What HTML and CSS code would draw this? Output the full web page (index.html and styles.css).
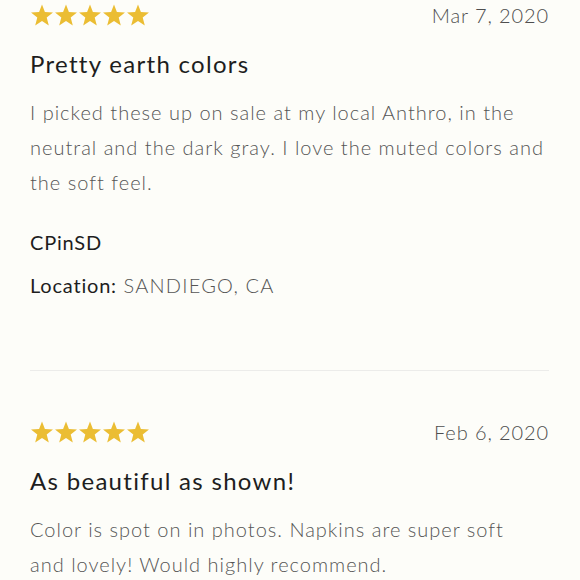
FILE: index.html
```html
<!DOCTYPE html>
<html lang="en">
<head>
  <meta charset="UTF-8" />
  <title>Reviews</title>
  <link rel="stylesheet" href="styles.css">
</head>
<body>
  <div class="reviews">
    <div class="review">
      <div class="review-top">
        <div class="stars">
          <svg viewBox="0 0 24 24"><path d="M12 1.5l2.9 7.6 8.1.4-6.3 5.1 2.1 7.9L12 18l-6.8 4.5 2.1-7.9L1 9.5l8.1-.4z"/></svg>
          <svg viewBox="0 0 24 24"><path d="M12 1.5l2.9 7.6 8.1.4-6.3 5.1 2.1 7.9L12 18l-6.8 4.5 2.1-7.9L1 9.5l8.1-.4z"/></svg>
          <svg viewBox="0 0 24 24"><path d="M12 1.5l2.9 7.6 8.1.4-6.3 5.1 2.1 7.9L12 18l-6.8 4.5 2.1-7.9L1 9.5l8.1-.4z"/></svg>
          <svg viewBox="0 0 24 24"><path d="M12 1.5l2.9 7.6 8.1.4-6.3 5.1 2.1 7.9L12 18l-6.8 4.5 2.1-7.9L1 9.5l8.1-.4z"/></svg>
          <svg viewBox="0 0 24 24"><path d="M12 1.5l2.9 7.6 8.1.4-6.3 5.1 2.1 7.9L12 18l-6.8 4.5 2.1-7.9L1 9.5l8.1-.4z"/></svg>
        </div>
        <span class="date">Mar 7, 2020</span>
      </div>
      <h3 class="title">Pretty earth colors</h3>
      <p class="body">I picked these up on sale at my local Anthro, in the neutral and the dark gray. I love the muted colors and the soft feel.</p>
      <p class="author">CPinSD</p>
      <p class="location"><span class="label">Location:</span> SANDIEGO, CA</p>
    </div>

    <div class="review">
      <div class="review-top">
        <div class="stars">
          <svg viewBox="0 0 24 24"><path d="M12 1.5l2.9 7.6 8.1.4-6.3 5.1 2.1 7.9L12 18l-6.8 4.5 2.1-7.9L1 9.5l8.1-.4z"/></svg>
          <svg viewBox="0 0 24 24"><path d="M12 1.5l2.9 7.6 8.1.4-6.3 5.1 2.1 7.9L12 18l-6.8 4.5 2.1-7.9L1 9.5l8.1-.4z"/></svg>
          <svg viewBox="0 0 24 24"><path d="M12 1.5l2.9 7.6 8.1.4-6.3 5.1 2.1 7.9L12 18l-6.8 4.5 2.1-7.9L1 9.5l8.1-.4z"/></svg>
          <svg viewBox="0 0 24 24"><path d="M12 1.5l2.9 7.6 8.1.4-6.3 5.1 2.1 7.9L12 18l-6.8 4.5 2.1-7.9L1 9.5l8.1-.4z"/></svg>
          <svg viewBox="0 0 24 24"><path d="M12 1.5l2.9 7.6 8.1.4-6.3 5.1 2.1 7.9L12 18l-6.8 4.5 2.1-7.9L1 9.5l8.1-.4z"/></svg>
        </div>
        <span class="date">Feb 6, 2020</span>
      </div>
      <h3 class="title">As beautiful as shown!</h3>
      <p class="body">Color is spot on in photos. Napkins are super soft<br>and lovely! Would highly recommend.</p>
    </div>
  </div>
</body>
</html>
```

FILE: styles.css
```css
body {
  margin: 0;
  background-color: #fdfdf9;
  font-family: Lato, 'Liberation Sans', sans-serif;
  overflow: hidden;
}

.reviews {
  padding: 0 31px 0 30px;
}

.review {
  padding-top: 1px;
}

.review + .review {
  border-top: 1px solid #ececea;
  margin-top: 70px;
  padding-top: 47px;
}

.review-top {
  display: flex;
  justify-content: space-between;
  align-items: center;
  height: 28px;
}

.stars {
  display: flex;
}

.stars svg {
  width: 24px;
  height: 24px;
  fill: #ebbd33;
}

.date {
  font-size: 20px;
  font-weight: 300;
  color: #4e4e4e;
  letter-spacing: 0.9px;
}

.title {
  margin: 20px 0 0;
  font-size: 24px;
  font-weight: 400;
  color: #1e1e1e;
  letter-spacing: 1.3px;
  line-height: 30px;
}

.body {
  margin: 16px 0 0;
  font-size: 20px;
  font-weight: 300;
  line-height: 35px;
  color: #555;
  letter-spacing: 1px;
}

.author {
  margin: 27px 0 0;
  font-size: 20px;
  line-height: 30px;
  color: #1e1e1e;
  letter-spacing: 0.8px;
}

.location {
  margin: 13px 0 0;
  font-size: 20px;
  font-weight: 300;
  line-height: 30px;
  color: #555;
  letter-spacing: 1.2px;
}

.label {
  font-weight: 400;
  color: #1e1e1e;
  letter-spacing: 0.8px;
}
```
